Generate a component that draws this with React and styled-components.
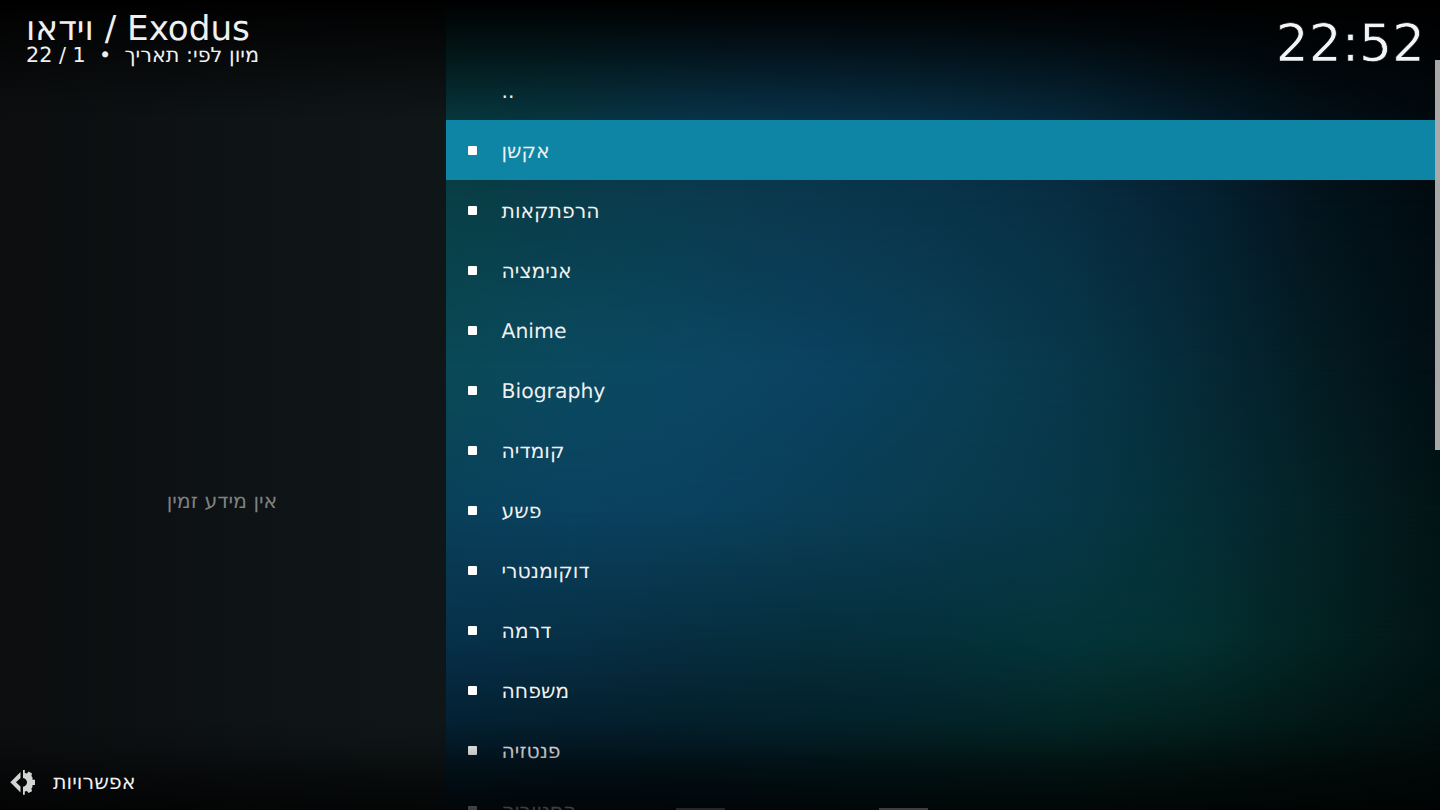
import React from 'react';
import styled, { createGlobalStyle } from 'styled-components';

const GlobalStyle = createGlobalStyle`
  * { box-sizing: border-box; }
  html, body { margin: 0; background: #000; }
  body {
    font-family: 'DejaVu Sans', sans-serif;
    color: #f0f0f0;
    overflow: hidden;
    text-rendering: geometricPrecision;
  }
`;

const Screen = styled.div`
  position: relative;
  display: grid;
  grid-template-columns: 446px 1fr 5px;
  width: 1440px;
  height: 810px;
  overflow: hidden;
`;

const Backdrop = styled.div`
  position: absolute;
  inset: 0 0 0 445px;
`;

const Band = styled.div`
  position: absolute;
  inset: 0;
  background: linear-gradient(to right, ${({ $colors }) => $colors.join(', ')});
  ${({ $from, $to }) =>
    $to > 0 &&
    `mask-image: linear-gradient(to bottom, transparent ${$from}px, #000 ${$to}px);`}
`;

const Shade = styled.div`
  position: absolute;
  left: 0;
  right: 0;
  pointer-events: none;
`;

const TopShade = styled(Shade)`
  top: 0;
  height: 120px;
  background: linear-gradient(to bottom, #000 0%, rgba(0, 0, 0, 0.75) 25%, rgba(0, 0, 0, 0.42) 55%, rgba(0, 0, 0, 0.12) 85%, transparent 100%);
`;

const BottomShade = styled(Shade)`
  bottom: 0;
  height: 90px;
  background: linear-gradient(to bottom, transparent 0%, rgba(0, 0, 0, 0.13) 28%, rgba(0, 0, 0, 0.5) 64%, rgba(0, 0, 0, 0.76) 100%);
`;

const Sidebar = styled.aside`
  position: relative;
  display: flex;
  flex-direction: column;
  justify-content: space-between;
  background: linear-gradient(to right, #0c0e0f 0%, #0d1113 35%, #0f1517 80%, #0f1618 100%);
`;

const SidebarPart = styled.div`
  position: relative;
  z-index: 2;
`;

const Heading = styled(SidebarPart)`
  padding: 8px 0 0 26px;
  white-space: pre;
`;

const Title = styled.h1`
  margin: 0;
  font-size: 34.2px;
  line-height: 36px;
  padding-top: 3px;
  height: 36px;
  font-weight: 400;
`;

const Subtitle = styled.div`
  font-size: 20.75px;
  line-height: 22px;
`;

const EmptyInfo = styled(SidebarPart)`
  padding: 181px 2px 0 0;
  font-size: 20.5px;
  line-height: 24px;
  text-align: center;
  color: #7f8283;
`;

const Options = styled(SidebarPart)`
  display: flex;
  align-items: center;
  gap: 17px;
  height: 56px;
  padding-left: 10px;
  font-size: 20.7px;
`;

const Main = styled.main`
  position: relative;
  height: 810px;
  overflow: hidden;
`;

const TopBar = styled.header`
  position: relative;
  z-index: 2;
  display: flex;
  justify-content: flex-end;
  height: 60px;
  padding: 14px 10px 0 0;
`;

const Clock = styled.time`
  font-size: 51.8px;
  line-height: 60px;
  color: #f4f4f4;
  -webkit-text-stroke: 0.7px #01060a;
`;

const List = styled.ul`
  margin: 0;
  padding: 0;
  list-style: none;
`;

const Row = styled.li`
  position: relative;
  z-index: ${({ $active }) => ($active ? 1 : 0)};
  display: flex;
  align-items: center;
  gap: 24.5px;
  height: 60px;
  padding: 1px 0 0 22px;
  font-size: 20.4px;
  background: ${({ $active }) => ($active ? '#0f85a5' : 'transparent')};
`;

const Marker = styled.span`
  width: 9px;
  height: 9px;
  border-radius: 1px;
  background: ${({ $hidden }) => ($hidden ? 'transparent' : '#fff')};
`;

const ScrollTrack = styled.div`
  position: relative;
  z-index: 2;
  padding-top: 60px;
`;

const ScrollThumb = styled.div`
  height: 390px;
  background: #a9a9a9;
`;

const PeekTabs = styled.div`
  position: absolute;
  left: 676px;
  bottom: 0;
  display: flex;
  gap: 154px;
`;

const PeekTab = styled.span`
  width: 49px;
  height: 2px;
  background: ${({ $tone }) => $tone};
`;

const OptionsIcon = () => (
  <svg width="26" height="27" viewBox="0 0 26 27" fill="#d4d4d4">
    <path d="M10.500 3v6L6 13.300l4.500 4.300v6L.3 13.300z" />
    <path d="M13 .9h1.800v3.200l2.200.4 1.500-1.900 3.500 1.800-.6 2.600 1 1.300.2 2.400H25v5.200h-2.400l-.2 2.400-1 1.300.6 2.600-3.500 1.800-1.500-1.900-2.200.4v3.200H13v-8c2.300-.2 4-2.100 4-4.400s-1.700-4.200-4-4.400z" />
  </svg>
);

const BANDS = [
  { at: 0, colors: ['#032b2d', '#042a32', '#05283a', '#06273c', '#052435', '#041d2c', '#021119', '#01090f', '#01060a'] },
  { at: 200, colors: ['#093f46', '#093d4b', '#0a3b4f', '#0a384e', '#09344a', '#082e42', '#052334', '#03141d', '#010b10'] },
  { at: 370, colors: ['#0a4956', '#0a4a60', '#0b4762', '#0b4260', '#0a3f57', '#08384a', '#062b39', '#041c23', '#020f14'] },
  { at: 510, colors: ['#0a405a', '#0a425f', '#0a415e', '#0a3e57', '#093b4f', '#073848', '#052f38', '#042226', '#021416'] },
  { at: 640, colors: ['#07304a', '#073046', '#072e40', '#062e3c', '#05303b', '#043439', '#043132', '#032222', '#021516'] },
  { at: 760, colors: ['#031a28', '#031824', '#021922', '#021b22', '#021d1f', '#021e1c', '#021916', '#011310', '#010d0c'] },
];

const ITEMS = [
  '..', 'אקשן', 'הרפתקאות', 'אנימציה', 'Anime', 'Biography', 'קומדיה',
  'פשע', 'דוקומנטרי', 'דרמה', 'משפחה', 'פנטזיה', 'הסטוריה',
];

export default function App() {
  return (
    <>
      <GlobalStyle />
      <Screen>
        <Backdrop>
          {BANDS.map((band, i) => (
            <Band key={band.at} $colors={band.colors} $from={i ? BANDS[i - 1].at : 0} $to={band.at} />
          ))}
          <TopShade />
        </Backdrop>
        <Sidebar>
          <TopShade />
          <BottomShade />
          <Heading>
            <Title>וידאו / Exodus</Title>
            <Subtitle>{'22 / 1  •  מיון לפי: תאריך'}</Subtitle>
          </Heading>
          <EmptyInfo>אין מידע זמין</EmptyInfo>
          <Options>
            <OptionsIcon />
            <span>אפשרויות</span>
          </Options>
        </Sidebar>
        <Main>
          <TopBar>
            <Clock>22:52</Clock>
          </TopBar>
          <List>
            {ITEMS.map((item, i) => (
              <Row key={item} $active={i === 1}>
                <Marker $hidden={i === 0} />
                <span>{item}</span>
              </Row>
            ))}
          </List>
          <BottomShade />
        </Main>
        <ScrollTrack>
          <ScrollThumb />
          <BottomShade />
        </ScrollTrack>
        <PeekTabs>
          <PeekTab $tone="#262626" />
          <PeekTab $tone="#3e3e3e" />
        </PeekTabs>
      </Screen>
    </>
  );
}
